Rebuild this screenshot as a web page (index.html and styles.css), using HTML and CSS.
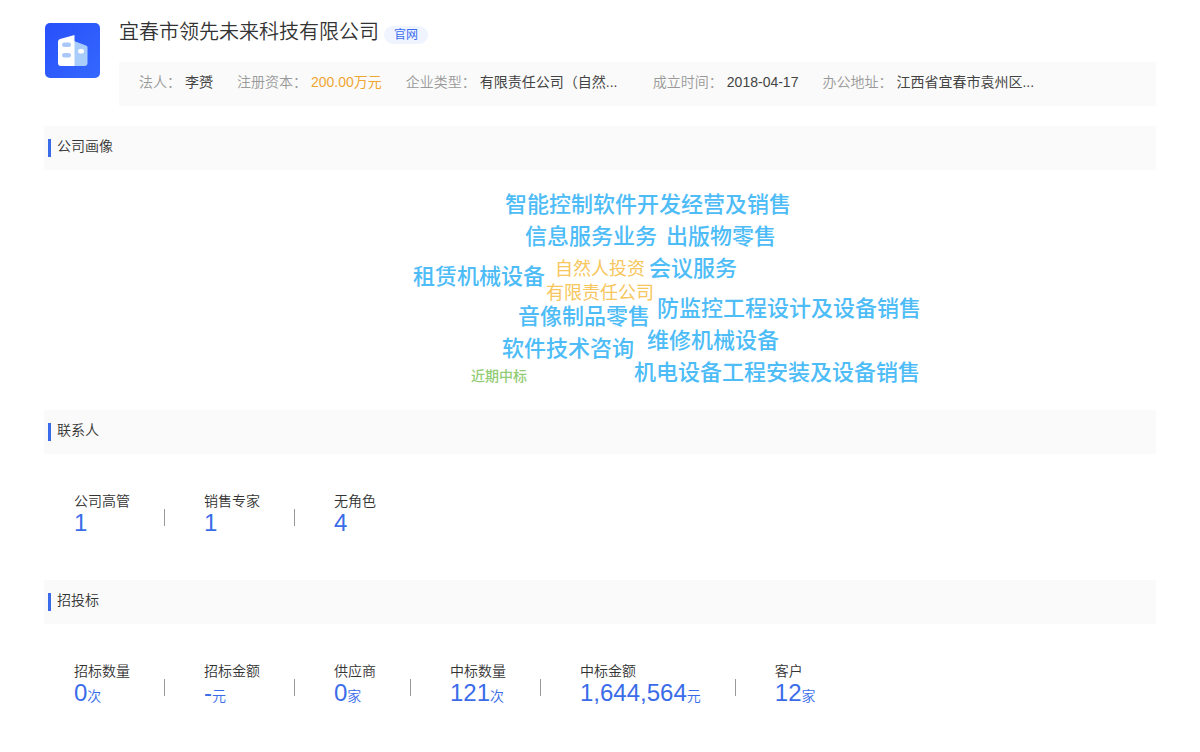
FILE: index.html
```html
<!DOCTYPE html>
<html lang="zh-CN">
<head>
<meta charset="utf-8">
<title>宜春市领先未来科技有限公司</title>
<link rel="stylesheet" href="styles.css">
</head>
<body>
<main class="page">
  <header class="company">
    <svg class="logo" viewBox="0 0 55 55" aria-hidden="true">
      <defs>
        <linearGradient id="bg" x1="0" y1="0" x2="1" y2="1">
          <stop offset="0" stop-color="#2850fa"/>
          <stop offset="1" stop-color="#3468fe"/>
        </linearGradient>
      </defs>
      <rect width="55" height="55" rx="5" fill="url(#bg)"/>
      <path d="M29 18l12 4.500q1.500 .6 1.500 2V40q0 3-3 3H29z" fill="#a9cdfb"/>
      <path d="M13 18.500q0-2 2-2.600L29.500 12v31H16q-3 0-3-3z" fill="#fff"/>
      <rect x="17" y="19.500" width="9" height="4.500" rx="2.200" fill="#a9c8f8"/>
      <rect x="17" y="30" width="9" height="4.500" rx="2.200" fill="#a9c8f8"/>
      <rect x="33" y="26" width="6" height="4.500" rx="2.200" fill="#fff"/>
    </svg>
    <div class="company-main">
      <div class="title-row">
        <h1 class="name">宜春市领先未来科技有限公司</h1>
        <a class="site" href="#">官网</a>
      </div>
      <dl class="facts">
        <div class="fact"><dt>法人：</dt><dd>李赟</dd></div>
        <div class="fact"><dt>注册资本：</dt><dd class="money">200.00万元</dd></div>
        <div class="fact"><dt>企业类型：</dt><dd class="wide">有限责任公司（自然...</dd></div>
        <div class="fact"><dt>成立时间：</dt><dd>2018-04-17</dd></div>
        <div class="fact"><dt>办公地址：</dt><dd class="wide">江西省宜春市袁州区...</dd></div>
      </dl>
    </div>
  </header>

  <section>
    <h2 class="bar">公司画像</h2>
    <div class="cloud">
      <span class="word w1">智能控制软件开发经营及销售</span>
      <span class="word w2">信息服务业务</span>
      <span class="word w3">出版物零售</span>
      <span class="word w4">租赁机械设备</span>
      <span class="word mid w5">自然人投资</span>
      <span class="word w6">会议服务</span>
      <span class="word mid w7">有限责任公司</span>
      <span class="word w8">音像制品零售</span>
      <span class="word w9">防监控工程设计及设备销售</span>
      <span class="word w10">软件技术咨询</span>
      <span class="word w11">维修机械设备</span>
      <span class="word small w12">近期中标</span>
      <span class="word w13">机电设备工程安装及设备销售</span>
    </div>
  </section>

  <section>
    <h2 class="bar">联系人</h2>
    <dl class="stats">
      <div class="stat"><dt>公司高管</dt><dd>1</dd></div>
      <div class="stat"><dt>销售专家</dt><dd>1</dd></div>
      <div class="stat"><dt>无角色</dt><dd>4</dd></div>
    </dl>
  </section>

  <section>
    <h2 class="bar">招投标</h2>
    <dl class="stats">
      <div class="stat"><dt>招标数量</dt><dd>0<small>次</small></dd></div>
      <div class="stat"><dt>招标金额</dt><dd>-<small>元</small></dd></div>
      <div class="stat"><dt>供应商</dt><dd>0<small>家</small></dd></div>
      <div class="stat"><dt>中标数量</dt><dd>121<small>次</small></dd></div>
      <div class="stat"><dt>中标金额</dt><dd>1,644,564<small>元</small></dd></div>
      <div class="stat"><dt>客户</dt><dd>12<small>家</small></dd></div>
    </dl>
  </section>
</main>
</body>
</html>
```
FILE: styles.css
```css
* { box-sizing: border-box; }
body, h1, h2, dl, dd { margin: 0; }
body {
  background: #fff;
  color: #444;
  font: 14px/20px "Liberation Sans", "Noto Sans CJK SC", sans-serif;
}
.page { padding: 16px 44px 0; }

.company { display: flex; gap: 19px; margin-bottom: 20px; }
.logo { flex: none; width: 55px; height: 55px; margin: 7px 0 0 1px; }
.company-main { flex: 1; min-width: 0; }
.title-row { display: flex; align-items: center; gap: 5px; height: 32px; margin-bottom: 14px; }
.name { font-size: 20px; line-height: 32px; font-weight: 350; color: #333; }
.site {
  margin-top: 6px;
  padding: 0 10px;
  border-radius: 9px;
  background: #eff4ff;
  color: #3a6cf0;
  font-size: 12px;
  line-height: 18px;
  text-decoration: none;
}
.facts {
  display: flex;
  gap: 24px;
  height: 44px;
  padding: 10px 20px;
  background: #fafafa;
  white-space: nowrap;
}
.fact { display: flex; gap: 4px; }
.fact dt { color: #999; font-weight: 350; }
.fact dd { color: #444; }
.fact .money { color: #f0a632; }
.fact .wide { width: 149px; }

.bar {
  display: flex;
  align-items: center;
  gap: 6px;
  height: 44px;
  padding: 0 4px 4px;
  background: #fafafa;
  font-size: 14px;
  font-weight: 350;
  color: #333;
}
.bar::before { content: ""; width: 3px; height: 18px; margin-top: 4px; background: #3a6cea; }

.cloud { position: relative; width: 512px; height: 240px; margin: 0 auto; }
.word {
  position: absolute;
  color: #4dbcf7;
  font-size: 22px;
  line-height: 32px;
  font-weight: 500;
  white-space: nowrap;
}
.mid { color: #f7c65c; font-size: 18px; line-height: 24px; font-weight: 400; }
.small { color: #92cc76; font-size: 14px; line-height: 20px; }
.w1 { left: 161px; top: 19px; }
.w2 { left: 181px; top: 51px; }
.w3 { left: 322px; top: 51px; }
.w4 { left: 69px; top: 91px; }
.w5 { left: 211px; top: 87px; }
.w6 { left: 305px; top: 83px; }
.w7 { left: 202px; top: 111px; }
.w8 { left: 174px; top: 131px; }
.w9 { left: 313px; top: 123px; }
.w10 { left: 158px; top: 163px; }
.w11 { left: 303px; top: 155px; }
.w12 { left: 127px; top: 196px; }
.w13 { left: 290px; top: 187px; }

.stats { display: flex; height: 126px; padding: 37px 30px 0; }
.stat { display: flex; flex-direction: column; position: relative; padding-right: 74px; }
.stat:not(:last-child)::after {
  content: "";
  position: absolute;
  right: 39px;
  top: 18px;
  width: 1px;
  height: 17px;
  background: #999;
}
.stat dt { line-height: 20px; font-weight: 350; color: #333; }
.stat dd { font-size: 24px; line-height: 24px; color: #3a6cea; }
.stat small { font-size: 14px; font-weight: 350; }
```
